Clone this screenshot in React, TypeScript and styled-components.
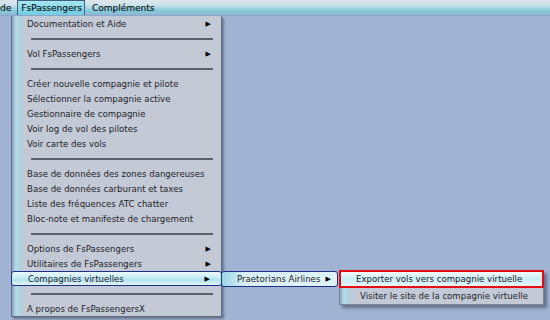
import React from 'react';
import styled, { createGlobalStyle } from 'styled-components';

const Global = createGlobalStyle`
  html, body { margin: 0; padding: 0; }
  body { font-family: 'DejaVu Sans', Verdana, sans-serif; }
`;

const Desktop = styled.div`
  position: relative;
  width: 550px;
  height: 320px;
  overflow: hidden;
  background: #a0b3d3;
  font-size: 8.6px;
  color: #1e2228;
`;

const MenuBar = styled.div`
  display: flex;
  align-items: stretch;
  height: 15px;
  background: linear-gradient(to bottom, #dfe5ea 0%, #c8e3ea 35%, #86cadb 70%, #8fb7d6 100%);
  border-bottom: 1px solid #8ea6c4;
`;

const BarItem = styled.div<{ active?: boolean; cut?: boolean }>`
  display: flex;
  align-items: center;
  padding: ${({ active }) => (active ? '0 2px 0 3px' : '0 3px')};
  margin-left: ${({ active, cut }) => (cut ? '-4px' : active ? '2px' : '3px')};
  font-size: 9px;
  color: #101820;
  text-shadow: 0.3px 0 0 rgba(16, 24, 32, 0.5);
  background: ${({ active }) =>
    active ? 'linear-gradient(to bottom, #a6e6f1, #6fcde2)' : 'transparent'};
  border: 1px solid ${({ active }) => (active ? '#3f5f86' : 'transparent')};
  border-bottom: none;
`;

const Panel = styled.div`
  position: relative;
  margin-left: 11px;
  width: 209px;
  background: linear-gradient(to right, #8aa3c2 0px, #b6dbe6 4px, #aed0df 8px, #c3cad6 13px, #c3cad6 100%);
  border: 1px solid #5f6c80;
  border-top: none;
  box-shadow: 2px 2px 2px rgba(40, 50, 70, 0.45);
`;

const Item = styled.div<{ selected?: boolean }>`
  position: relative;
  display: flex;
  align-items: center;
  justify-content: space-between;
  height: 15px;
  box-sizing: border-box;
  padding: 0 10px 0 15px;
  white-space: nowrap;
  ${({ selected }) =>
    selected &&
    `
    margin: 0 -1px;
    padding: 0 11px 0 16px;
    border: 1px solid #1d2f86;
    border-radius: 3px;
    background: linear-gradient(to bottom, #eef8fb 0%, #c3ecf3 45%, #b2e2ee 60%, #e3f5f8 100%);
  `}
`;

const Arrow = styled.span`
  font-size: 7px;
  color: #000;
`;

const Separator = styled.div`
  height: 15px;
  display: flex;
  align-items: center;
  padding: 0 8px 0 19px;
  &::after {
    content: '';
    flex: 1;
    height: 2px;
    background: #5a626e;
  }
`;

const CompanyBox = styled.div`
  position: absolute;
  left: 209px;
  top: -1px;
  width: 117px;
  height: 16px;
  box-sizing: border-box;
  display: flex;
  align-items: center;
  justify-content: space-between;
  padding: 0 6px 0 15px;
  border: 1px solid #1d2f86;
  border-radius: 3px;
  background: linear-gradient(to right, #9bd6e6 0%, #d8f0f5 20%, #dff2f6 100%);
  white-space: nowrap;
`;

const SubPanel = styled.div`
  position: absolute;
  left: 117px;
  top: -2px;
  width: 205px;
  background: linear-gradient(to right, #8aa3c2 0px, #b6dbe6 4px, #aed0df 8px, #c3cad6 13px, #c3cad6 100%);
  border: 1px solid #7c8698;
  box-sizing: border-box;
  box-shadow: 3px 3px 3px rgba(40, 50, 70, 0.5);
`;

const SubItem = styled.div<{ marked?: boolean }>`
  height: 16px;
  display: flex;
  align-items: center;
  box-sizing: border-box;
  white-space: nowrap;
  padding-left: ${({ marked }) => (marked ? '15px' : '20px')};
  ${({ marked }) =>
    marked &&
    `
    margin: -1px -1px 0 -1px;
    height: 18px;
    border: 2px solid #e30d12;
    background: linear-gradient(to bottom, #f2fafc 0%, #c8eef5 50%, #e6f6f9 100%);
  `}
`;

type Entry = { label?: string; sub?: boolean; sep?: boolean; selected?: boolean };

const entries: Entry[] = [
  { label: 'Documentation et Aide', sub: true },
  { sep: true },
  { label: 'Vol FsPassengers', sub: true },
  { sep: true },
  { label: 'Créer nouvelle compagnie et pilote' },
  { label: 'Sélectionner la compagnie active' },
  { label: 'Gestionnaire de compagnie' },
  { label: 'Voir log de vol des pilotes' },
  { label: 'Voir carte des vols' },
  { sep: true },
  { label: 'Base de données des zones dangereuses' },
  { label: 'Base de données carburant et taxes' },
  { label: 'Liste des fréquences ATC chatter' },
  { label: 'Bloc-note et manifeste de chargement' },
  { sep: true },
  { label: 'Options de FsPassengers', sub: true },
  { label: 'Utilitaires de FsPassengers', sub: true },
  { label: 'Compagnies virtuelles', sub: true, selected: true },
  { sep: true },
  { label: 'A propos de FsPassengersX' },
];

export default function App(): JSX.Element {
  return (
    <Desktop>
      <Global />
      <MenuBar>
        <BarItem cut>de</BarItem>
        <BarItem active>FsPassengers</BarItem>
        <BarItem>Compléments</BarItem>
      </MenuBar>
      <Panel>
        {entries.map((e, i) =>
          e.sep ? (
            <Separator key={i} />
          ) : (
            <Item key={i} selected={e.selected}>
              <span>{e.label}</span>
              {e.sub && <Arrow>▶</Arrow>}
              {e.selected && (
                <CompanyBox>
                  <span>Praetorians Airlines</span>
                  <Arrow>▶</Arrow>
                  <SubPanel>
                    <SubItem marked>Exporter vols vers compagnie virtuelle</SubItem>
                    <SubItem>Visiter le site de la compagnie virtuelle</SubItem>
                  </SubPanel>
                </CompanyBox>
              )}
            </Item>
          )
        )}
      </Panel>
    </Desktop>
  );
}
